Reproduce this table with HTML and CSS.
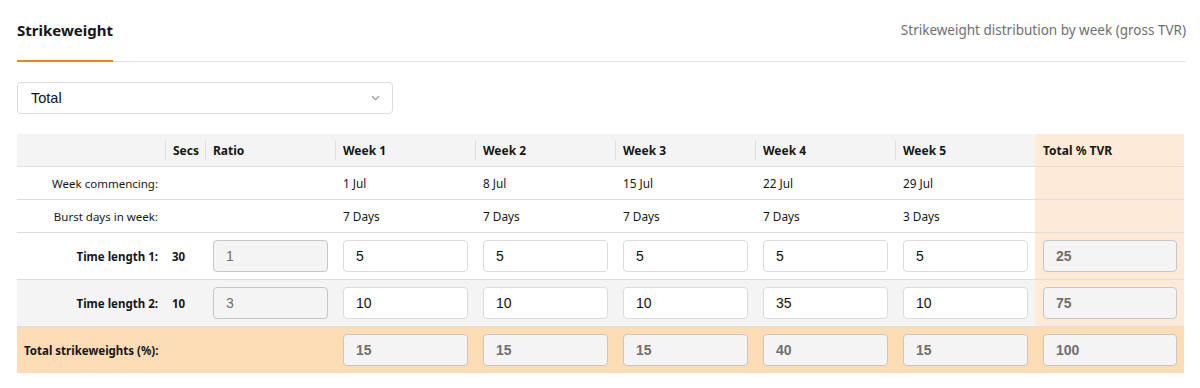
FILE: index.html
```html
<!DOCTYPE html>
<html lang="en">
<head>
<meta charset="utf-8">
<title>Strikeweight</title>
<link rel="stylesheet" href="styles.css">
</head>
<body>
<div class="page">
  <div class="tabbar">
    <div class="tab">Strikeweight</div>
    <div class="subtitle">Strikeweight distribution by week (gross TVR)</div>
  </div>

  <div class="select">
    <span class="select-value">Total</span>
    <svg class="chevron" width="9" height="6" viewBox="0 0 9 6"><path d="M1 1.2 L4.5 4.6 L8 1.2" fill="none" stroke="#999" stroke-width="1.3"/></svg>
  </div>

  <table class="grid">
    <colgroup>
      <col class="c-label"><col class="c-secs"><col class="c-ratio">
      <col class="c-week"><col class="c-week"><col class="c-week"><col class="c-week"><col class="c-week">
      <col class="c-total">
    </colgroup>
    <thead>
      <tr class="head">
        <th></th>
        <th><div class="th-in">Secs</div></th>
        <th><div class="th-in">Ratio</div></th>
        <th><div class="th-in">Week 1</div></th>
        <th><div class="th-in">Week 2</div></th>
        <th><div class="th-in">Week 3</div></th>
        <th><div class="th-in">Week 4</div></th>
        <th><div class="th-in">Week 5</div></th>
        <th class="tot"><div class="th-in nosep">Total % TVR</div></th>
      </tr>
    </thead>
    <tbody>
      <tr class="info">
        <td class="lbl">Week commencing:</td><td></td><td></td>
        <td>1 Jul</td><td>8 Jul</td><td>15 Jul</td><td>22 Jul</td><td>29 Jul</td>
        <td class="tot"></td>
      </tr>
      <tr class="info">
        <td class="lbl">Burst days in week:</td><td></td><td></td>
        <td>7 Days</td><td>7 Days</td><td>7 Days</td><td>7 Days</td><td>3 Days</td>
        <td class="tot"></td>
      </tr>
      <tr class="len">
        <td class="lbl b">Time length 1:</td><td class="secs">30</td>
        <td class="inp"><div class="field ro">1</div></td>
        <td class="inp"><div class="field">5</div></td>
        <td class="inp"><div class="field">5</div></td>
        <td class="inp"><div class="field">5</div></td>
        <td class="inp"><div class="field">5</div></td>
        <td class="inp"><div class="field">5</div></td>
        <td class="inp tot"><div class="field ro b">25</div></td>
      </tr>
      <tr class="len alt">
        <td class="lbl b">Time length 2:</td><td class="secs">10</td>
        <td class="inp"><div class="field ro">3</div></td>
        <td class="inp"><div class="field">10</div></td>
        <td class="inp"><div class="field">10</div></td>
        <td class="inp"><div class="field">10</div></td>
        <td class="inp"><div class="field">35</div></td>
        <td class="inp"><div class="field">10</div></td>
        <td class="inp tot"><div class="field ro b">75</div></td>
      </tr>
      <tr class="len sum">
        <td class="sumlbl" colspan="3">Total strikeweights (%):</td>
        <td class="inp"><div class="field ro b">15</div></td>
        <td class="inp"><div class="field ro b">15</div></td>
        <td class="inp"><div class="field ro b">15</div></td>
        <td class="inp"><div class="field ro b">40</div></td>
        <td class="inp"><div class="field ro b">15</div></td>
        <td class="inp"><div class="field ro b">100</div></td>
      </tr>
    </tbody>
  </table>
</div>
</body>
</html>
```
FILE: styles.css
```css
* { box-sizing: border-box; }
html, body { margin: 0; padding: 0; background: #fff; }
body {
  font-family: "Noto Sans", "DejaVu Sans", sans-serif;
  color: #161616;
}
.page {
  padding: 0 14px 0 17px;
}
.tabbar {
  display: flex;
  justify-content: space-between;
  align-items: flex-end;
  border-bottom: 1px solid #e0e0e0;
  height: 62px;
}
.tab {
  font-size: 15px;
  font-weight: 700;
  line-height: 20px;
  padding: 19px 0 20px;
  width: 96px;
  border-bottom: 2px solid #f18a00;
  white-space: nowrap;
  margin-bottom: -1px;
}
.subtitle {
  font-size: 13.5px;
  color: #6f6f6f;
  line-height: 20px;
  align-self: flex-start;
  padding-top: 20px;
}
.select {
  margin-top: 20px;
  width: 376px;
  height: 32px;
  border: 1px solid #dcdcdc;
  border-radius: 4px;
  display: flex;
  align-items: center;
  justify-content: space-between;
  padding: 0 12px 0 13px;
  font-family: "Liberation Sans", Arial, sans-serif;
  font-size: 14.5px;
  color: #111;
}
.chevron { display: block; }

.grid {
  margin-top: 20px;
  border-collapse: collapse;
  table-layout: fixed;
  width: 1167px;
  font-size: 11.5px;
}
.c-label { width: 148px; }
.c-secs { width: 40px; }
.c-ratio { width: 130px; }
.c-week { width: 140px; }
.c-total { width: 149px; }

.head { background: #f4f4f4; }
.head th {
  padding: 6px 0;
  text-align: left;
  font-weight: 700;
  font-size: 12px;
  border-bottom: 1px solid #dedede;
}
.th-in {
  height: 20px;
  line-height: 21px;
  border-left: 1px solid #dedede;
  padding-left: 7px;
  white-space: nowrap;
}
.th-in.nosep { border-left-color: transparent; }
.head th.tot { background: #fdebd8; }

.info td {
  height: 33px;
  border-bottom: 1px solid #dedede;
  padding: 0 0 0 8px;
  white-space: nowrap;
  vertical-align: middle;
  font-size: 11.8px;
}
.info td.lbl { font-size: 11.5px; }
td.lbl {
  text-align: right;
  padding: 0 7px 0 0 !important;
  white-space: nowrap;
}
td.b, .b { font-weight: 700; }
td.tot { background: #fdebd8; }

.len td {
  padding: 7px 7px 7px 8px;
  border-bottom: 1px solid #dedede;
  vertical-align: middle;
}
.len td.secs { padding: 0 0 0 7px; font-weight: 700; }
.alt { background: #f4f4f4; }
.sum { background: #fcdcb4; }
.sum td { border-bottom: none; }
.sum td.sumlbl { padding-left: 7px; font-weight: 700; }

.field {
  height: 32px;
  line-height: 30px;
  border: 1px solid #dcdcdc;
  border-radius: 4px;
  background: #fff;
  padding-left: 12px;
  font-family: "Liberation Sans", Arial, sans-serif;
  font-size: 14px;
  color: #111;
}
.field.ro {
  background: #f4f4f4;
  border-color: #c6c6c6;
  color: #6f6f6f;
}
```
